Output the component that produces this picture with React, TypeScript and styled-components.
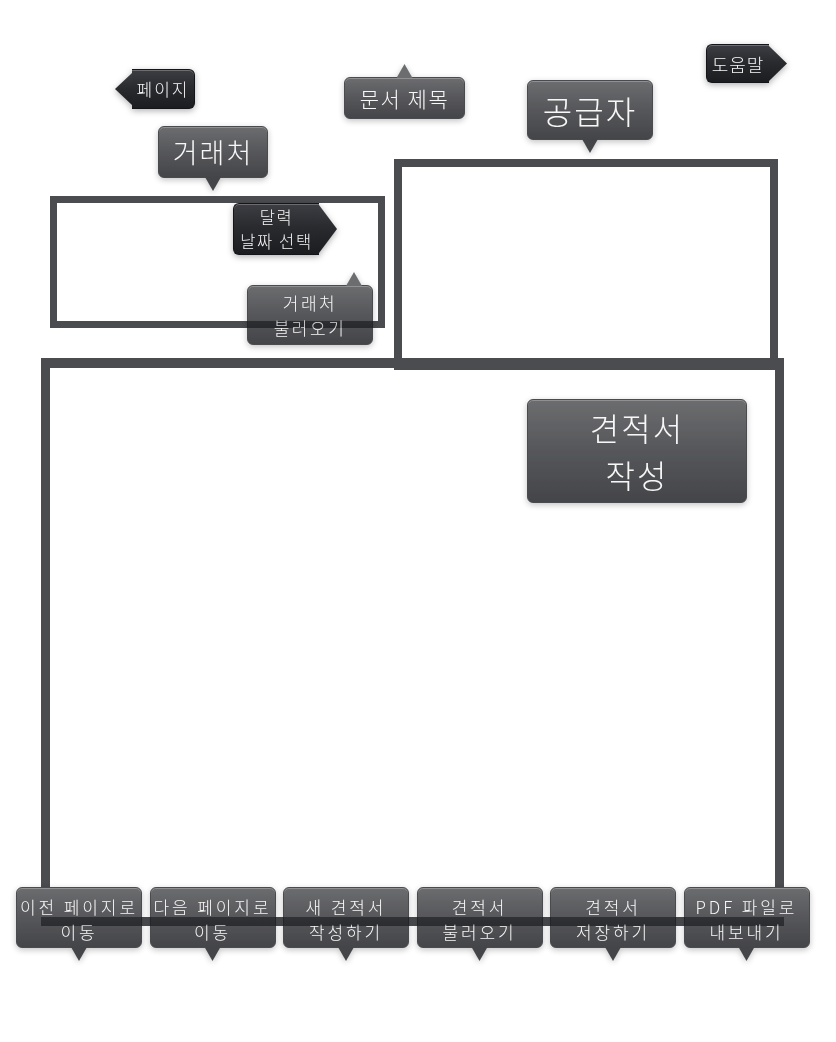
import React from "react";
import styled, { createGlobalStyle, css } from "styled-components";

type Tone = "gray" | "dark";
type Arrow = "up" | "down" | "left" | "right" | "none";

interface Note {
  lines: string[];
  tone: Tone;
  arrow: Arrow;
  x: number;
  y: number;
  w: number;
  h: number;
  size: number;
  spacing?: number;
  lineHeight?: number;
  arrowAt?: number;
}

// gray bubbles are a little see-through, so frame lines show as a darker band under them
const TONES = {
  gray: { top: "#454649", mid: "#2c2d31", bottom: "#131418", edge: "#1a1b1f", alpha: 0.79 },
  dark: { top: "#3d3e43", mid: "#2a2b2f", bottom: "#1c1d21", edge: "#141518", alpha: 1 },
};

const LINE = "#4b4c50";

const GlobalStyle = createGlobalStyle`
  html, body {
    margin: 0;
    padding: 0;
    background: #ffffff;
  }
  body {
    font-family: "Noto Sans CJK KR", "Noto Sans", sans-serif;
  }
`;

const Canvas = styled.div`
  position: relative;
  width: 836px;
  height: 1042px;
  box-sizing: border-box;
  padding: 159px 0 0 41px;
  overflow: hidden;
`;

const TopRow = styled.div`
  display: flex;
  align-items: flex-start;
`;

const Frame = styled.div<{ $w: number; $h: number; $line: number }>`
  box-sizing: border-box;
  width: ${({ $w }) => $w}px;
  height: ${({ $h }) => $h}px;
  border: ${({ $line }) => $line}px solid ${LINE};
  flex: none;
`;

const ClientFrame = styled(Frame)`
  margin: 37px 0 0 9px;
`;

const SupplierFrame = styled(Frame)`
  margin-left: 9px;
`;

// the side lines of the sheet stop where the action buttons begin
const SheetFrame = styled.div`
  box-sizing: border-box;
  width: 743px;
  height: 568px;
  margin-top: -12px;
  background:
    linear-gradient(${LINE}, ${LINE}) left top / 100% 10px no-repeat,
    linear-gradient(${LINE}, ${LINE}) left top / 9px 529px no-repeat,
    linear-gradient(${LINE}, ${LINE}) right top / 9px 529px no-repeat,
    linear-gradient(${LINE}, ${LINE}) left bottom / 100% 9px no-repeat;
`;

const ActionRow = styled.div`
  position: relative;
  z-index: 1;
  display: flex;
  gap: 7.5px;
  margin: -39px 0 0 -25px;
`;

const gradient = (tone: Tone) => {
  const t = TONES[tone];
  return `linear-gradient(${t.top}, ${t.mid} 45%, ${t.bottom})`;
};

const arrowCss = (arrow: Arrow, tone: Tone, at?: number) => {
  const t = TONES[tone];
  const left = at !== undefined ? `${at - 8}px` : "calc(50% - 8px)";
  switch (arrow) {
    case "down":
      return css`
        &::after {
          content: "";
          position: absolute;
          top: 100%;
          left: ${left};
          width: 16px;
          height: 14px;
          background: ${t.bottom};
          clip-path: polygon(0 0, 100% 0, 50% 100%);
        }
      `;
    case "up":
      return css`
        &::after {
          content: "";
          position: absolute;
          bottom: 100%;
          left: ${left};
          width: 16px;
          height: 14px;
          background: ${t.top};
          clip-path: polygon(50% 0, 100% 100%, 0 100%);
        }
      `;
    case "left":
      return css`
        border-top-left-radius: 0;
        border-bottom-left-radius: 0;
        border-left: none;
        &::after {
          content: "";
          position: absolute;
          right: 100%;
          top: 3px;
          bottom: 3px;
          width: 17px;
          background: ${gradient(tone)};
          clip-path: polygon(100% 0, 0 50%, 100% 100%);
        }
      `;
    case "right":
      return css`
        border-top-right-radius: 0;
        border-bottom-right-radius: 0;
        border-right: none;
        &::after {
          content: "";
          position: absolute;
          left: 100%;
          top: 1px;
          bottom: 1px;
          width: 18px;
          background: ${gradient(tone)};
          clip-path: polygon(0 0, 100% 50%, 0 100%);
        }
      `;
    default:
      return css``;
  }
};

const Bubble = styled.div<{
  $tone: Tone;
  $arrow: Arrow;
  $size: number;
  $spacing: number;
  $lh: number;
  $at?: number;
}>`
  position: relative;
  box-sizing: border-box;
  display: flex;
  flex-direction: column;
  align-items: center;
  justify-content: center;
  color: #f6f6f6;
  font-weight: 300;
  font-size: ${({ $size }) => $size}px;
  line-height: ${({ $lh }) => $lh}px;
  letter-spacing: ${({ $spacing }) => $spacing}px;
  white-space: nowrap;
  border-radius: 6px;
  border: 1px solid ${({ $tone }) => TONES[$tone].edge};
  background: ${({ $tone }) => gradient($tone)};
  box-shadow: inset 0 1px 0 rgba(255, 255, 255, 0.25);
  opacity: ${({ $tone }) => TONES[$tone].alpha};
  filter: drop-shadow(0 2px 3px rgba(0, 0, 0, 0.3));
  ${({ $arrow, $tone, $at }) => arrowCss($arrow, $tone, $at)}
`;

const FloatingNote = styled(Bubble)<{ $x: number; $y: number; $w: number; $h: number }>`
  position: absolute;
  z-index: 1;
  left: ${({ $x }) => $x}px;
  top: ${({ $y }) => $y}px;
  width: ${({ $w }) => $w}px;
  height: ${({ $h }) => $h}px;
`;

const ActionButton = styled(Bubble)`
  width: 126px;
  height: 61px;
  flex: none;
  padding-top: 2px;
`;

const Line = styled.span`
  display: block;
`;

const NOTES: Note[] = [
  { lines: ["페이지"], tone: "dark", arrow: "left", x: 132, y: 69, w: 63, h: 40, size: 17, spacing: 2, lineHeight: 20 },
  { lines: ["문서 제목"], tone: "gray", arrow: "up", x: 344, y: 77, w: 121, h: 42, size: 21, spacing: 1.5, lineHeight: 26 },
  { lines: ["공급자"], tone: "gray", arrow: "down", x: 527, y: 80, w: 126, h: 60, size: 32, spacing: 2, lineHeight: 38 },
  { lines: ["도움말"], tone: "dark", arrow: "right", x: 706, y: 44, w: 63, h: 39, size: 18, spacing: 1, lineHeight: 22 },
  { lines: ["거래처"], tone: "gray", arrow: "down", x: 158, y: 126, w: 110, h: 52, size: 27, spacing: 2, lineHeight: 32 },
  { lines: ["달력", "날짜 선택"], tone: "dark", arrow: "right", x: 233, y: 203, w: 86, h: 52, size: 16.5, spacing: 1.6, lineHeight: 24 },
  { lines: ["거래처", "불러오기"], tone: "gray", arrow: "up", x: 247, y: 285, w: 126, h: 60, size: 17, spacing: 2.5, lineHeight: 25, arrowAt: 106 },
  { lines: ["견적서", "작성"], tone: "gray", arrow: "none", x: 527, y: 399, w: 220, h: 104, size: 32, spacing: 2, lineHeight: 47 },
];

const ACTIONS: string[][] = [
  ["이전 페이지로", "이동"],
  ["다음 페이지로", "이동"],
  ["새 견적서", "작성하기"],
  ["견적서", "불러오기"],
  ["견적서", "저장하기"],
  ["PDF 파일로", "내보내기"],
];

export default function App() {
  return (
    <>
      <GlobalStyle />
      <Canvas>
        {NOTES.map((n) => (
          <FloatingNote
            key={n.lines.join("-")}
            $tone={n.tone}
            $arrow={n.arrow}
            $size={n.size}
            $spacing={n.spacing ?? 0}
            $lh={n.lineHeight ?? n.size + 4}
            $at={n.arrowAt}
            $x={n.x}
            $y={n.y}
            $w={n.w}
            $h={n.h}
          >
            {n.lines.map((l) => (
              <Line key={l}>{l}</Line>
            ))}
          </FloatingNote>
        ))}

        <TopRow>
          <ClientFrame $w={335} $h={132} $line={7} />
          <SupplierFrame $w={384} $h={211} $line={8} />
        </TopRow>
        <SheetFrame />

        <ActionRow>
          {ACTIONS.map((lines) => (
            <ActionButton
              key={lines.join("-")}
              $tone="gray"
              $arrow="down"
              $size={17}
              $spacing={2.9}
              $lh={25}
            >
              {lines.map((l) => (
                <Line key={l}>{l}</Line>
              ))}
            </ActionButton>
          ))}
        </ActionRow>
      </Canvas>
    </>
  );
}
